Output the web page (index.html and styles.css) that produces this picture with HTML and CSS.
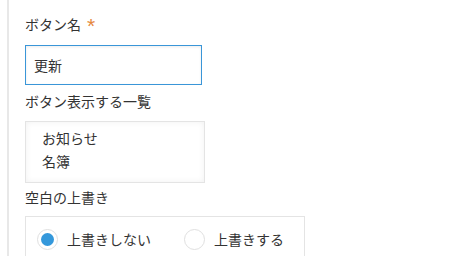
FILE: index.html
```html
<!DOCTYPE html>
<html lang="ja">
<head>
<meta charset="utf-8">
<link rel="stylesheet" href="styles.css">
</head>
<body>
<div class="panel">
  <div class="field-label">ボタン名<span class="req">*</span></div>
  <div class="text-input">更新</div>
  <div class="field-label second">ボタン表示する一覧</div>
  <div class="list-box">
    <div class="list-item">お知らせ</div>
    <div class="list-item">名簿</div>
  </div>
  <div class="field-label third">空白の上書き</div>
  <div class="radio-box">
    <label class="radio-option">
      <span class="radio checked"></span>
      <span class="radio-text">上書きしない</span>
    </label>
    <label class="radio-option">
      <span class="radio"></span>
      <span class="radio-text">上書きする</span>
    </label>
  </div>
</div>
</body>
</html>
```

FILE: styles.css
```css
html, body {
  margin: 0;
  padding: 0;
  background: #ffffff;
  width: 449px;
  height: 256px;
  overflow: hidden;
}

body {
  font-family: "Noto Sans CJK JP", "Noto Sans", sans-serif;
  font-size: 14px;
  color: #333333;
}

.panel {
  margin-left: 7px;
  border-left: 2px solid #e8e8e8;
  padding: 14px 0 0 16px;
  height: 256px;
  box-sizing: border-box;
  overflow: hidden;
}

.field-label {
  line-height: 20px;
  height: 20px;
}

.req {
  color: #e5883d;
  font-family: "Liberation Sans", sans-serif;
  font-size: 21px;
  margin-left: 6px;
  vertical-align: top;
  line-height: 24px;
}

.text-input {
  margin-top: 11px;
  width: 177px;
  height: 40px;
  box-sizing: border-box;
  border: 1px solid #3a96d8;
  box-shadow: inset 0 1px 3px rgba(0, 0, 0, 0.08);
  padding: 0 8px;
  line-height: 38px;
}

.second {
  margin-top: 6px;
}

.list-box {
  margin-top: 10px;
  width: 180px;
  height: 62px;
  box-sizing: border-box;
  border: 1px solid #e4e4e4;
  box-shadow: inset 0 0 6px rgba(0, 0, 0, 0.06);
  padding: 5px 16px 0;
}

.list-item {
  line-height: 23px;
}

.third {
  margin-top: 4px;
}

.radio-box {
  margin-top: 9px;
  width: 280px;
  height: 40px;
  box-sizing: border-box;
  border: 1px solid #e4e4e4;
  border-bottom: none;
  padding: 11px 0 0 11px;
  display: flex;
  gap: 33px;
}

.radio-option {
  display: flex;
  align-items: center;
  gap: 9px;
  height: 22px;
}

.radio {
  width: 21px;
  height: 21px;
  box-sizing: border-box;
  border: 1px solid #e0e0e0;
  border-radius: 50%;
  background: #ffffff;
  position: relative;
}

.radio.checked::after {
  content: "";
  position: absolute;
  left: 3px;
  top: 3px;
  width: 13px;
  height: 13px;
  border-radius: 50%;
  background: #3498db;
}

.radio-text {
  line-height: 20px;
}
```
